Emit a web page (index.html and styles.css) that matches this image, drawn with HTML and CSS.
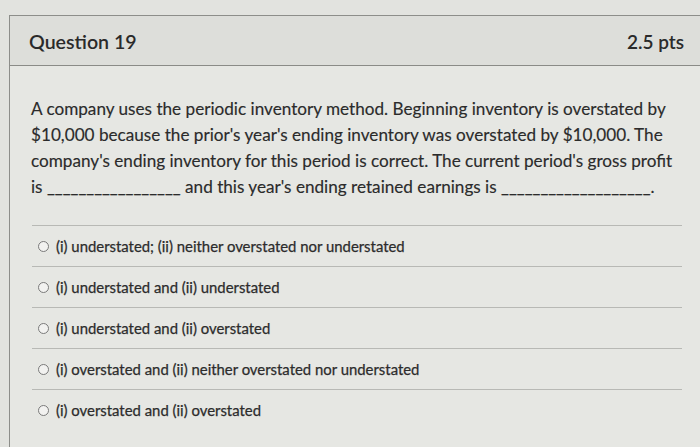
FILE: index.html
```html
<!DOCTYPE html>
<html>
<head>
<meta charset="utf-8">
<link rel="stylesheet" href="styles.css">
</head>
<body>
<div class="page">
  <div class="question">
    <div class="header">
      <span class="title">Question 19</span>
      <span class="pts">2.5 pts</span>
    </div>
    <div class="content">
      <p class="prompt">A company uses the periodic inventory method. Beginning inventory is overstated by $10,000 because the prior's year's ending inventory was overstated by $10,000. The company's ending inventory for this period is correct. The current period's gross profit is _________________ and this year's ending retained earnings is ___________________.</p>
      <ul class="answers">
        <li class="answer"><span class="radio"></span><span>(i) understated; (ii) neither overstated nor understated</span></li>
        <li class="answer"><span class="radio"></span><span>(i) understated and (ii) understated</span></li>
        <li class="answer"><span class="radio"></span><span>(i) understated and (ii) overstated</span></li>
        <li class="answer"><span class="radio"></span><span>(i) overstated and (ii) neither overstated nor understated</span></li>
        <li class="answer"><span class="radio"></span><span>(i) overstated and (ii) overstated</span></li>
      </ul>
    </div>
  </div>
</div>
</body>
</html>
```

FILE: styles.css
```css
html, body {
  margin: 0;
  padding: 0;
}
body {
  background: #e2e3df;
  font-family: Lato, "Open Sans", sans-serif;
  color: #2c2c2c;
  width: 700px;
  height: 447px;
  overflow: hidden;
}
.page {
  padding: 15px 0 0 9px;
}
.question {
  border-left: 1px solid #8d8e8a;
  border-top: 1px solid #8d8e8a;
  background: #e6e7e3;
  height: 440px;
}
.header {
  display: flex;
  justify-content: space-between;
  align-items: center;
  padding: 2px 16px 0 19px;
  box-sizing: border-box;
  height: 50px;
  background: #dddeda;
  border-bottom: 1px solid #8a8b87;
  color: #2a2a2a;
}
.title {
  font-size: 19.6px;
  font-weight: 600;
}
.pts {
  font-size: 19px;
  font-weight: 600;
}
.content {
  padding: 30px 22px 0 21px;
}
.prompt {
  margin: 0;
  font-size: 17.15px;
  line-height: 26px;
  color: #2b2b2b;
  -webkit-text-stroke: 0.15px #2b2b2b;
}
.answers {
  list-style: none;
  margin: 25px -4px 0 1px;
  padding: 0;
}
.answer {
  border-top: 1px solid #b8b9b5;
  height: 40px;
  display: flex;
  align-items: center;
  padding-left: 6px;
  gap: 7px;
  font-size: 14.9px;
  color: #2c2c2c;
  -webkit-text-stroke: 0.25px #2c2c2c;
}
.radio {
  width: 9px;
  height: 9px;
  border: 1.5px solid #7a7a7a;
  border-radius: 50%;
  background: #f2f2f0;
  flex: none;
}
```
